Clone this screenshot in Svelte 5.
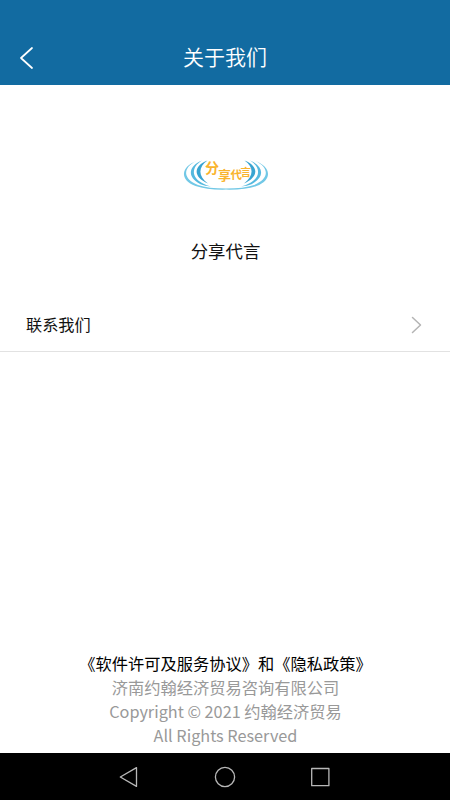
<script lang="ts">
    type LogoChar = {
        char: string;
        x: number;
        y: number;
        size: number;
    };

    const appName = '分享代言';

    // Each character of the logo sits at its own height
    const logoChars: LogoChar[] = [
        { char: '分', x: 30, y: 28, size: 14 },
        { char: '享', x: 43, y: 34.5, size: 13 },
        { char: '代', x: 55.5, y: 34, size: 11.5 },
        { char: '言', x: 65.5, y: 31, size: 10.5 }
    ];

    const copyright = ['济南约翰经济贸易咨询有限公司', 'Copyright © 2021 约翰经济贸易', 'All Rights Reserved'];
</script>

<div class="page">
    <header class="header">
        <button class="back" aria-label="返回">
            <svg width="14" height="22" viewBox="0 0 14 22">
                <path d="M12 1 L1 11 L12 21" />
            </svg>
        </button>
        <h1>关于我们</h1>
    </header>

    <section class="brand">
        <svg class="logo" width="100" height="60" viewBox="0 0 100 60">
            {#each ['', 'translate(102 0) scale(-1 1)'] as transform}
                <g {transform}>
                    <path class="light" d="M21.5 16 C7 23 8 34 23 40 Q33 43.5 51 43.6 V44.6 Q32 45 20.5 41 C4.5 35 5.5 22 21.5 16Z" />
                    <path class="mid" d="M27 15.5 C16 22 16 33 28.5 38.7 Q31 40.2 36 41.5 Q30 41.2 25.5 39.2 C11.5 32 13.5 21 27 15.5Z" />
                    <path class="dark" d="M32.5 15.5 C23 22 23 31 33 38.5 C18 32 18 21 32.5 15.5Z" />
                </g>
            {/each}
            {#each logoChars as c}
                <text x={c.x} y={c.y} font-size={c.size}>{c.char}</text>
            {/each}
        </svg>
        <div class="app-name">{appName}</div>
    </section>

    <div class="row">
        <span>联系我们</span>
        <svg width="12" height="18" viewBox="0 0 12 18">
            <path d="M1.5 1.5 L9.5 9 L1.5 16.5" />
        </svg>
    </div>

    <footer class="footer">
        <div class="links">《软件许可及服务协议》和《隐私政策》</div>
        {#each copyright as line}
            <div>{line}</div>
        {/each}
    </footer>

    <nav class="nav-bar">
        <svg width="22" height="22" viewBox="0 0 22 22">
            <path d="M2.3 11 L18.5 1.6 V20.4 Z" />
        </svg>
        <svg width="22" height="22" viewBox="0 0 22 22">
            <circle cx="11" cy="11" r="9.6" />
        </svg>
        <svg width="22" height="22" viewBox="0 0 22 22">
            <rect x="1.7" y="2.5" width="17.2" height="17.2" />
        </svg>
    </nav>
</div>

<style>
:global(body) {
    background-color: #fff;
}

.page {
    display: flex;
    flex-direction: column;
    height: 800px;
    font-family: "Noto Sans CJK SC", sans-serif;
    color: #111;
}

.header {
    display: grid;
    grid-template-columns: 60px 1fr 60px;
    align-items: center;
    height: 57px;
    padding-top: 28px;
    background-color: #126ba1;
    color: #fff;
}

.header h1 {
    margin: 0;
    padding-bottom: 2px;
    font-size: 21px;
    font-weight: 350;
    line-height: 30px;
    text-align: center;
}

.back {
    display: flex;
    padding: 2px 0 0 20px;
    border: none;
    background: none;
}

svg {
    display: block;
    fill: none;
    stroke-linecap: round;
    stroke-linejoin: round;
}

.back path {
    stroke: #fff;
    stroke-width: 1.7;
}

.brand {
    display: flex;
    flex-direction: column;
    align-items: center;
    padding-top: 60px;
}

.logo text {
    fill: #f9b42e;
    font-weight: 700;
}

.light {
    fill: #72c8e6;
}

.mid {
    fill: #55b9df;
}

.dark {
    fill: #38a4d1;
}

.app-name {
    margin-top: 33px;
    padding-left: 1px;
    font-size: 17.4px;
    line-height: 26px;
}

.row {
    display: flex;
    justify-content: space-between;
    align-items: center;
    height: 52px;
    margin-top: 35px;
    padding: 0 27px 0 26px;
    border-bottom: 1px solid #e2e2e2;
    font-size: 16.2px;
}

.row span {
    padding-bottom: 2px;
}

.row path {
    stroke: #b4b4b4;
    stroke-width: 1.5;
}

.footer {
    margin-top: auto;
    padding: 0 0 5.5px 1px;
    font-size: 16.25px;
    line-height: 23.8px;
    text-align: center;
    color: #999;
}

.links {
    color: #000;
}

.nav-bar {
    display: flex;
    justify-content: center;
    align-items: center;
    gap: 74px;
    height: 47px;
    background-color: #000;
}

.nav-bar svg {
    stroke: #b8b8b8;
    stroke-width: 1.3;
}
</style>
